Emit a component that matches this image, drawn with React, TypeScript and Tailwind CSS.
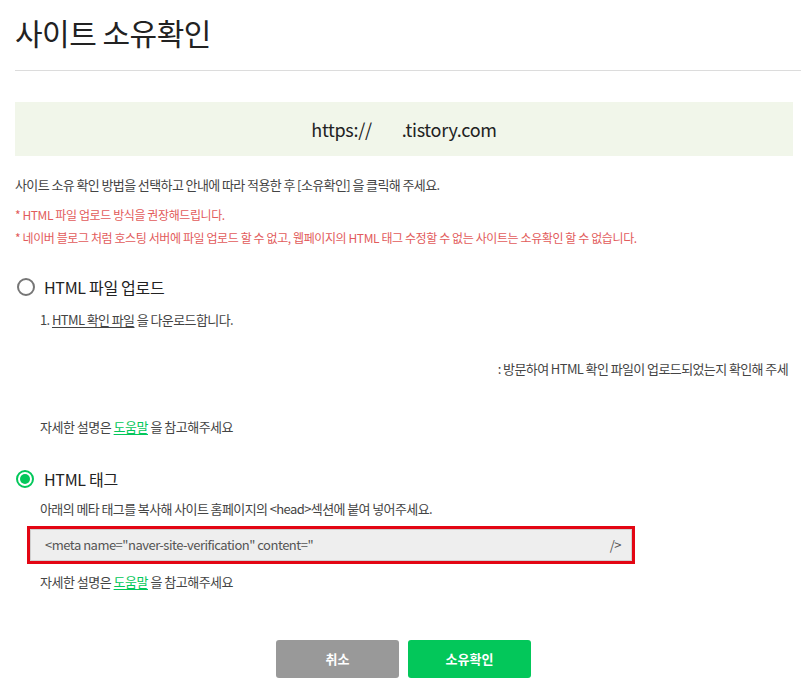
import React from "react";

const font = { fontFamily: '"Noto Sans CJK KR", "Noto Sans", sans-serif' };

function Radio(p: { checked?: boolean }) {
  if (p.checked) {
    return (
      <span className="flex h-[18px] w-[18px] items-center justify-center rounded-full border-2 border-[#03c75a]">
        <span className="h-[10px] w-[10px] rounded-full bg-[#03c75a]" />
      </span>
    );
  }
  return <span className="h-[18px] w-[18px] rounded-full border-2 border-[#767676]" />;
}

function HelpLine() {
  return (
    <p className="text-[13px] leading-[20px] tracking-[-0.5px] text-[#444]">
      자세한 설명은{" "}
      <a className="text-[#03c75a] underline underline-offset-2">도움말</a> 을 참고해주세요
    </p>
  );
}

export default function App() {
  return (
    <main className="min-h-[700px] bg-white pl-[15px] text-[#222]" style={font}>
      <h1 className="pt-[12px] text-[30px] leading-[40px] font-normal tracking-[-0.5px] text-[#222]">
        사이트 소유확인
      </h1>
      <hr className="mt-[18px] border-t border-[#dcdcdc]" />

      <section className="mt-[31px] mr-[8px] flex h-[54px] items-center justify-center bg-[#f1f6ea]">
        <span className="text-[18px] tracking-[-0.3px] text-[#222]">
          https://<span className="inline-block w-[30px]" />.tistory.com
        </span>
      </section>

      <p className="mt-[19px] text-[13px] leading-[20px] tracking-[-0.6px] text-[#444]">
        사이트 소유 확인 방법을 선택하고 안내에 따라 적용한 후 [소유확인] 을 클릭해 주세요.
      </p>
      <ul className="mt-[8px] text-[12px] leading-[23px] tracking-[-0.4px] text-[#e25b5b]">
        <li>* HTML 파일 업로드 방식을 권장해드립니다.</li>
        <li>* 네이버 블로그 처럼 호스팅 서버에 파일 업로드 할 수 없고, 웹페이지의 HTML 태그 수정할 수 없는 사이트는 소유확인 할 수 없습니다.</li>
      </ul>

      <label className="mt-[26px] ml-[2px] flex items-center gap-[9px]">
        <Radio />
        <span className="text-[16px] leading-[24px] tracking-[-0.3px] text-[#222]">HTML 파일 업로드</span>
      </label>
      <div className="pl-[25px]">
        <p className="mt-[11px] text-[13px] leading-[20px] tracking-[-0.6px] text-[#444]">
          1. <span className="underline underline-offset-2">HTML 확인 파일</span> 을 다운로드합니다.
        </p>
        <p className="mt-[29px] pr-[13px] text-right text-[13px] leading-[20px] tracking-[-0.6px] text-[#444]">
          : 방문하여 HTML 확인 파일이 업로드되었는지 확인해 주세
        </p>
        <div className="mt-[38px]">
          <HelpLine />
        </div>
      </div>

      <label className="mt-[30px] ml-[1px] flex items-center gap-[10px]">
        <Radio checked />
        <span className="text-[16px] leading-[24px] tracking-[-0.3px] text-[#222]">HTML 태그</span>
      </label>
      <div className="pl-[12px]">
        <p className="mt-[8px] pl-[13px] text-[13px] leading-[20px] tracking-[-0.6px] text-[#444]">
          아래의 메타 태그를 복사해 사이트 홈페이지의 &lt;head&gt;섹션에 붙여 넣어주세요.
        </p>
        <div className="mt-[7px] w-[608px] border-[3px] border-[#e30613]">
          <div className="flex h-[32px] items-center justify-between border border-[#cfcfcf] bg-[#eeeeee] pr-[10px] pl-[14px] text-[13px] tracking-[-0.5px] text-[#555]">
            <span>&lt;meta name="naver-site-verification" content="</span>
            <span>/&gt;</span>
          </div>
        </div>
        <div className="mt-[8px] pl-[13px]">
          <HelpLine />
        </div>
      </div>

      <div className="mt-[48px] flex justify-center gap-[9px] pr-[9px]">
        <button className="h-[38px] w-[123px] rounded-[3px] bg-[#999999] text-[13px] font-bold text-white">
          취소
        </button>
        <button className="h-[38px] w-[123px] rounded-[3px] bg-[#03c75a] text-[13px] font-bold text-white">
          소유확인
        </button>
      </div>
    </main>
  );
}
